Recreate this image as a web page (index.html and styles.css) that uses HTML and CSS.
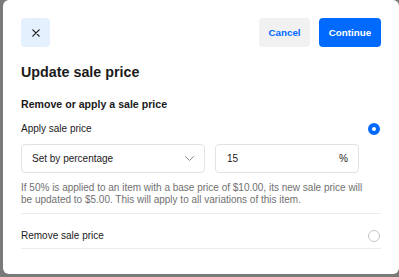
FILE: index.html
```html
<!DOCTYPE html>
<html lang="en">
<head>
<meta charset="UTF-8" />
<title>Update sale price</title>
<link rel="stylesheet" href="styles.css">
</head>
<body>
  <div class="modal">
    <div class="modal-header">
      <button class="btn-close" type="button" aria-label="Close">
        <svg width="8" height="8" viewBox="0 0 10 10"><path d="M1 1L9 9M9 1L1 9" stroke="#1a1a1a" stroke-width="1.5" stroke-linecap="round"/></svg>
      </button>
      <div class="actions">
        <button class="btn btn-secondary" type="button">Cancel</button>
        <button class="btn btn-primary" type="button">Continue</button>
      </div>
    </div>

    <h1 class="title">Update sale price</h1>
    <h2 class="subtitle">Remove or apply a sale price</h2>

    <div class="option-row">
      <span>Apply sale price</span>
      <span class="radio checked"></span>
    </div>

    <div class="fields">
      <div class="field select">
        <span>Set by percentage</span>
        <svg width="9" height="5" viewBox="0 0 9 5"><path d="M0.5 0.5l4 4 4-4" fill="none" stroke="#8a8a8a" stroke-width="1" stroke-linecap="round" stroke-linejoin="round"/></svg>
      </div>
      <div class="field amount">
        <span>15</span>
        <span>%</span>
      </div>
    </div>

    <p class="helper">If 50% is applied to an item with a base price of $10.00, its new sale price will be updated to $5.00. This will apply to all variations of this item.</p>

    <div class="option-row bordered">
      <span>Remove sale price</span>
      <span class="radio"></span>
    </div>
  </div>
</body>
</html>
```

FILE: styles.css
```css
body, html {
  margin: 0; padding: 0; height: 100%;
  font-family: "Liberation Sans", Arial, sans-serif;
  background: #7a7a7a;
  overflow: hidden;
}
.modal {
  margin-left: 3px;
  height: 274px;
  background: white;
  border-radius: 6px;
  padding: 18px 18px 0 18px;
  box-sizing: border-box;
  color: #1a1a1a;
}
.modal-header {
  display: flex;
  justify-content: space-between;
  align-items: center;
  height: 29px;
}
.btn-close {
  width: 29px;
  height: 29px;
  border: none;
  border-radius: 4px;
  background: #e5f0ff;
  display: flex;
  align-items: center;
  justify-content: center;
  padding: 0;
}
.actions {
  display: flex;
  gap: 9px;
}
.btn {
  height: 29px;
  border: none;
  border-radius: 4px;
  font-family: inherit;
  font-size: 9.8px;
  font-weight: 700;
  padding: 0;
}
.btn-secondary {
  background: #f1f1f1;
  color: #006aff;
  width: 51px;
}
.btn-primary {
  background: #006aff;
  color: white;
  width: 62px;
}
.title {
  font-size: 14.3px;
  font-weight: 700;
  margin: 16px 0 0 0;
  line-height: 18px;
}
.subtitle {
  font-size: 10.6px;
  font-weight: 700;
  margin: 16px 0 0 0;
  line-height: 14px;
}
.option-row {
  display: flex;
  justify-content: space-between;
  align-items: center;
  font-size: 10px;
  margin-top: 11px;
  line-height: 14px;
}
.option-row.bordered {
  border-top: 1px solid #ececec;
  border-bottom: 1px solid #ececec;
  margin-top: 0;
  height: 36px;
  box-sizing: border-box;
  padding-top: 9px;
}
.radio {
  width: 12px;
  height: 12px;
  border-radius: 50%;
  border: 1px solid #c6c6c6;
  box-sizing: border-box;
  margin-right: 1px;
}
.radio.checked {
  border: 4px solid #006aff;
  background: white;
}
.fields {
  display: flex;
  gap: 10px;
  margin-top: 8px;
}
.field {
  height: 29px;
  border: 1px solid #e3e3e3;
  border-radius: 4px;
  box-sizing: border-box;
  display: flex;
  align-items: center;
  justify-content: space-between;
  padding: 0 10px 0 10px;
  font-size: 10px;
}
.select {
  width: 184px;
}
.amount {
  width: 144px;
  padding-left: 11px;
}
.helper {
  margin: 9px 0 0 0;
  padding-right: 12px;
  font-size: 10px;
  line-height: 12px;
  color: #707070;
  padding-bottom: 7px;
}
```
